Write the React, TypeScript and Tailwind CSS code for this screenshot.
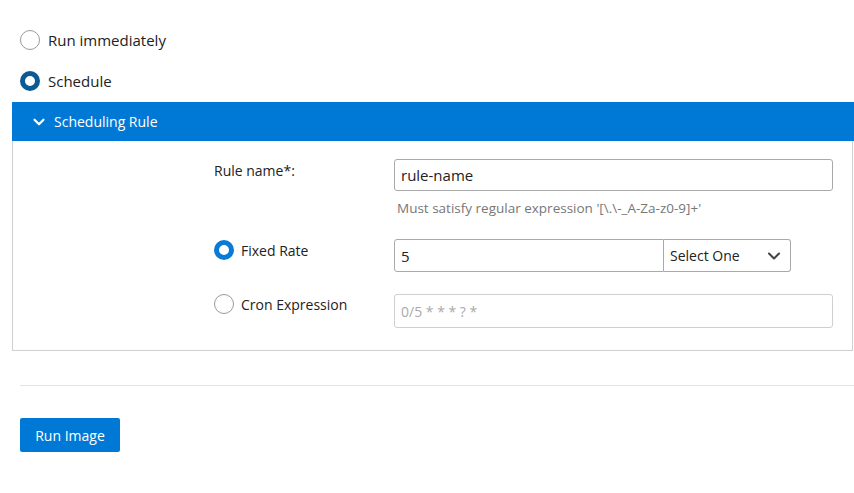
import { ChevronDown } from 'lucide-react'

function Radio({ checked, variant = 'blue' }: { checked: boolean; variant?: 'blue' | 'dark' }) {
  if (!checked) {
    return <span className="block w-[20px] h-[20px] rounded-full border border-[#9a9a9a] bg-white" />
  }
  return (
    <span
      className={`block w-[20px] h-[20px] rounded-full border-[5px] bg-white ${
        variant === 'dark' ? 'border-[#0a5a96]' : 'border-[#0a7ad6]'
      }`}
    />
  )
}

export default function App() {
  return (
    <div className="w-[854px] h-[493px] bg-white text-[#222] font-['Open_Sans',sans-serif]">
      <div className="pt-[30px]">
        <label className="flex items-center gap-[8px] pl-[20px] h-[20px]">
          <Radio checked={false} />
          <span className="text-[15px]">Run immediately</span>
        </label>
        <label className="flex items-center gap-[8px] pl-[20px] h-[20px] mt-[21px]">
          <Radio checked variant="dark" />
          <span className="text-[15px]">Schedule</span>
        </label>
      </div>

      {/* Scheduling rule panel */}
      <div className="ml-[12px] mt-[11px]">
        <div className="h-[39px] bg-[#0079d6] flex items-center pl-[18px] gap-[6px] text-white">
          <ChevronDown className="w-[18px] h-[18px]" strokeWidth={3} />
          <span className="text-[14px]">Scheduling Rule</span>
        </div>
        <div className="border border-t-0 border-[#cfcfcf] mr-[1px] h-[210px] pt-[18px]">
          <div className="grid grid-cols-[180px_439px] ml-[201px] gap-x-0">
            <div className="text-[14px] pt-[1px]">Rule name*:</div>
            <div>
              <div className="h-[32px] border border-[#a9a9a9] rounded-[3px] flex items-center px-[6px] text-[15px]">
                rule-name
              </div>
              <div className="text-[13.5px] text-[#777] mt-[7px] ml-[3px]">
                Must satisfy regular expression '[\.\-_A-Za-z0-9]+'
              </div>
            </div>

            <label className="flex items-center gap-[7px] h-[22px] mt-[21px]">
              <Radio checked />
              <span className="text-[14px]">Fixed Rate</span>
            </label>
            <div className="flex mt-[21px] w-[397px]">
              <div className="flex-1 h-[33px] border border-[#a9a9a9] rounded-l-[3px] flex items-center px-[6px] text-[15px]">
                5
              </div>
              <div className="w-[127px] h-[33px] border border-l-0 border-[#a9a9a9] rounded-r-[3px] flex items-center justify-between pl-[6px] pr-[6px] text-[14px]">
                <span>Select One</span>
                <ChevronDown className="w-[20px] h-[20px] text-[#444]" strokeWidth={2.5} />
              </div>
            </div>

            <label className="flex items-center gap-[7px] h-[22px] mt-[21px]">
              <Radio checked={false} />
              <span className="text-[14px]">Cron Expression</span>
            </label>
            <div className="mt-[22px] h-[34px] border border-[#cfcfcf] rounded-[3px] flex items-center px-[6px] text-[14px] text-[#aaa]">
              0/5 * * * ? *
            </div>
          </div>
        </div>
      </div>

      <div className="ml-[20px] mt-[34px] border-t border-[#e2e2e2]" />

      <button className="ml-[20px] mt-[32px] w-[100px] h-[34px] bg-[#0079d6] text-white text-[14px] rounded-[2px]">
        Run Image
      </button>
    </div>
  )
}
